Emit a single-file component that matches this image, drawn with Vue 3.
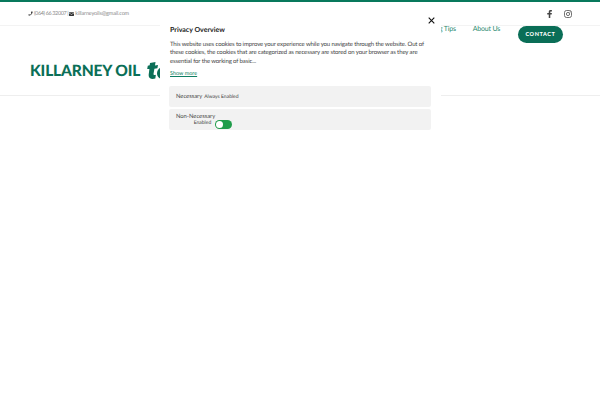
<script setup>
const phone = '(064) 66 32007'
const email = 'killarneyoils@gmail.com'
const intro = 'This website uses cookies to improve your experience while you navigate through the website. Out of these cookies, the cookies that are categorized as necessary are stored on your browser as they are essential for the working of basic...'
</script>

<template>
  <div class="page">
    <header class="site-header">
      <div class="topbar">
        <div class="contact-line">
          <svg class="tiny-icon" viewBox="0 0 16 16"><path d="M11.5 1 15 2.200c.3 5.800-5 12.300-12.300 12.800L1 11.500l3.500-1.500 1.500 1.800c1.800-.8 4-3 5-5L9.300 5.200z" /></svg>
          <span class="phone">{{ phone }} |</span>
          <svg class="tiny-icon mail" viewBox="0 0 16 12"><path d="M0 1.500C0 .7.700 0 1.500 0h13c.8 0 1.500.7 1.500 1.500v.5L8 7 0 2zM0 3.500V10.500c0 .8.700 1.500 1.500 1.500h13c.8 0 1.500-.7 1.500-1.500V3.500L8 8.500z" /></svg>
          <span>{{ email }}</span>
        </div>
        <div class="socials">
          <svg class="social" viewBox="0 0 12 16" width="6" height="8"><path d="M3.500 16V9H.5V6h3V4c0-2.700 1.500-4 3.900-4 1.100 0 2.100.1 2.400.1v2.700H8.100c-1.300 0-1.500.6-1.500 1.500V6h3.200l-.5 3H6.600v7z" /></svg>
          <svg class="social" viewBox="0 0 16 16" width="8" height="8"><rect x="1" y="1" width="14" height="14" rx="4" fill="none" stroke="currentColor" stroke-width="1.500" /><circle cx="8" cy="8" r="3.200" fill="none" stroke="currentColor" stroke-width="1.500" /><circle cx="12" cy="4" r="1" /></svg>
        </div>
      </div>
      <div class="mainbar">
        <div class="logo">
          <span>KILLARNEY OIL</span>
          <svg class="logo-mark" viewBox="0 0 20 17" width="20" height="17"><path d="M4 1 9.500 0 9 3.500l3-.6-.6 3.300-3 .5-.9 5.300c-.1.9.6 1.200 2.400.7l-.6 3.900C5 17.500 2.300 16.300 2.700 12.500l.7-5.600H1.200L1.800 3.700 3.700 3.200z" /><path d="M17 5c-3.500 0-6 3-6 6.500 0 3 2.300 5.300 5 5.300 1.500 0 2.800-.4 4-1V5.500z" /></svg>
        </div>
        <nav class="nav">
          <a>Heating Tips</a>
          <a>About Us</a>
        </nav>
        <a class="contact-btn">CONTACT</a>
      </div>
    </header>

    <section class="privacy-modal">
      <button class="close" type="button" aria-label="Close">
        <svg viewBox="0 0 10 10" width="7" height="7"><path d="M1 1l8 8M9 1l-8 8" /></svg>
      </button>
      <h2>Privacy Overview</h2>
      <p class="intro">{{ intro }}</p>
      <a class="show-more">Show more</a>
      <div class="cookie-row single">
        <span class="cookie-name">Necessary</span>
        <span class="cookie-state">Always Enabled</span>
      </div>
      <div class="cookie-row">
        <div class="stacked">
          <span class="cookie-name">Non-Necessary</span>
          <span class="cookie-state">Enabled</span>
        </div>
        <span class="toggle"><i></i></span>
      </div>
    </section>
  </div>
</template>

<style>
html, body {
  margin: 0;
  background: #fff;
}
</style>

<style scoped>
.page {
  position: relative;
  width: 600px;
  height: 400px;
  overflow: hidden;
  background: #fff;
  font-family: Lato, "Noto Sans", sans-serif;
  text-rendering: geometricPrecision;
}

.site-header {
  border-top: 2px solid #08795c;
  border-bottom: 1px solid #eeeeee;
  height: 93px;
}

.topbar {
  height: 23px;
  border-bottom: 1px solid #f3f3f3;
  padding: 0 28px;
  display: flex;
  align-items: center;
  justify-content: space-between;
}

.contact-line {
  display: flex;
  align-items: center;
  gap: 1px;
  font-size: 5.500px;
  letter-spacing: -.15px;
  color: #8a8a8a;
}

.phone {
  letter-spacing: -.38px;
}

.tiny-icon {
  width: 5px;
  height: 5px;
  fill: #333;
}

.tiny-icon.mail {
  height: 4px;
}

.socials {
  display: flex;
  align-items: center;
  gap: 11px;
  color: #444;
}

.social {
  fill: currentColor;
}

.mainbar {
  height: 69px;
  display: flex;
  align-items: flex-start;
  padding: 0 37px 0 30px;
}

.logo {
  margin-top: 36px;
  display: flex;
  align-items: flex-end;
  gap: 6px;
  color: #0b6f57;
  font-size: 15.500px;
  line-height: 15px;
  font-weight: 900;
  letter-spacing: -.15px;
  white-space: nowrap;
}

.logo-mark {
  fill: #0b6f57;
  flex: none;
}

.nav {
  margin-left: auto;
  margin-top: -2px;
  display: flex;
  gap: 17px;
  font-size: 7px;
  letter-spacing: -.2px;
  line-height: 10px;
  color: #2b8a70;
}

.contact-btn {
  margin-left: 18px;
  width: 45px;
  height: 17px;
  border-radius: 9px;
  background: #0a6e57;
  color: #fff;
  font-size: 5.500px;
  font-weight: 900;
  letter-spacing: .6px;
  display: flex;
  align-items: center;
  justify-content: center;
}

.privacy-modal {
  position: absolute;
  left: 160px;
  top: 14px;
  width: 281px;
  height: 122px;
  box-sizing: border-box;
  background: #fff;
  padding: 12px 10px 0 9px;
  color: #333;
}

.close {
  position: absolute;
  right: 6px;
  top: 3px;
  border: 0;
  padding: 0;
  background: none;
  line-height: 0;
}

.close svg {
  stroke: #111;
  stroke-width: 1.600;
}

h2 {
  margin: 0 0 6px 1px;
  font-size: 7px;
  line-height: 9px;
  font-weight: 700;
  color: #222;
}

.intro {
  margin: 0 0 0 1px;
  font-size: 6px;
  letter-spacing: -.12px;
  line-height: 8.250px;
  color: #444;
}

.show-more {
  display: block;
  margin: 5px 0 8px 1px;
  font-size: 5.500px;
  line-height: 7px;
  color: #0f7f63;
  text-decoration: underline;
}

.cookie-row {
  height: 21px;
  margin-bottom: 2px;
  padding: 0 7px;
  border-radius: 2px;
  background: #f2f2f2;
  display: flex;
  align-items: center;
  gap: 2px;
}

.single .cookie-state {
  margin-top: 1px;
}

.stacked {
  display: flex;
  flex-direction: column;
  align-items: flex-end;
}

.stacked .cookie-state {
  margin-right: 4px;
}

.cookie-name {
  font-size: 5.800px;
  line-height: 7px;
  color: #444;
}

.cookie-state {
  font-size: 5px;
  line-height: 6px;
  color: #444;
}

.stacked + .toggle {
  margin-top: 11px;
  margin-left: -2px;
}

.toggle {
  width: 17px;
  height: 9px;
  border-radius: 5px;
  background: #1f9c4a;
  position: relative;
  flex: none;
}

.toggle i {
  position: absolute;
  left: 1px;
  top: 1px;
  width: 7px;
  height: 7px;
  border-radius: 50%;
  background: #fff;
}
</style>
